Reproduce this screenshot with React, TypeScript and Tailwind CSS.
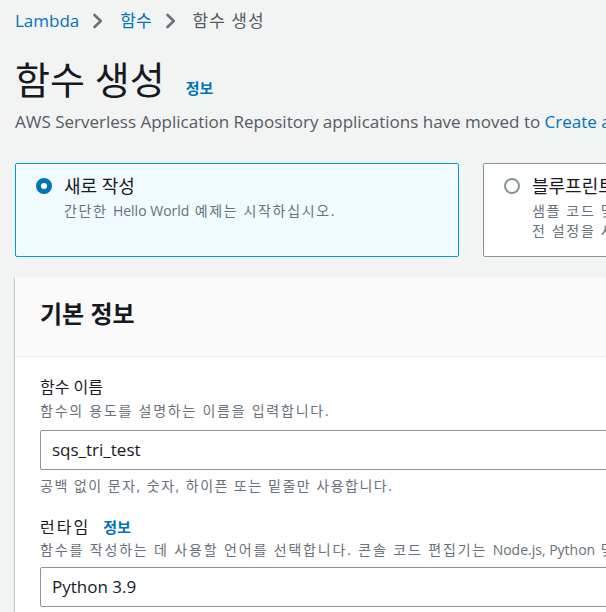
import React from "react";

const FONT = { fontFamily: '"Open Sans", "Noto Sans CJK KR", sans-serif' };

function Chevron() {
  return (
    <svg width="12" height="16" viewBox="0 0 12 16" className="ml-[13px] mr-[16px] shrink-0">
      <path d="M2.5 2 L8.8 8 L2.5 14" fill="none" stroke="#687078" strokeWidth="2.6" strokeLinecap="round" strokeLinejoin="round" />
    </svg>
  );
}

function L({ children }: { children: React.ReactNode }) {
  return <span className="tracking-normal">{children}</span>;
}

export default function App() {
  return (
    <div style={FONT} className="w-[606px] h-[612px] overflow-hidden bg-[#f2f3f3] pl-[15px] text-[#16191f]">
      {/* breadcrumb */}
      <div className="pt-[9px] flex items-center h-[33px] text-[17px] leading-[24px] whitespace-nowrap">
        <span className="text-[#0073bb]">Lambda</span>
        <Chevron />
        <span className="text-[#0073bb]">함수</span>
        <Chevron />
        <span className="text-[#545b64] tracking-[1px]">함수 생성</span>
      </div>

      {/* title */}
      <div className="mt-[24px] flex items-baseline whitespace-nowrap">
        <h1 className="text-[38px] leading-[44px] font-normal text-[#16191f]">함수 생성</h1>
        <span className="ml-[21px] text-[15px] font-bold text-[#0073bb]">정보</span>
      </div>

      <div className="mt-[10px] text-[17px] leading-[22px] text-[#545b64] whitespace-nowrap">
        AWS Serverless Application Repository applications have moved to{" "}
        <span className="text-[#0073bb]">Create application</span>.
      </div>

      {/* option cards */}
      <div className="mt-[30px] flex gap-[24px] w-[1000px]">
        <div className="w-[444px] h-[94px] shrink-0 rounded-[2px] border border-[#00a1c9] bg-[#f1faff] px-[20px] pt-[10px]">
          <div className="flex">
            <div className="mt-[4px] w-[16px] h-[16px] rounded-full border-[5px] border-[#0073bb] bg-white shrink-0" />
            <div className="ml-[12px]">
              <div className="text-[18px] leading-[24px] text-[#16191f]">새로 작성</div>
              <div className="mt-[3px] text-[14px] leading-[20px] tracking-[1.65px] text-[#687078] whitespace-nowrap">
                간단한 <L>Hello World</L> 예제는 시작하십시오.
              </div>
            </div>
          </div>
        </div>
        <div className="w-[444px] h-[94px] shrink-0 rounded-[2px] border border-[#879596] bg-white px-[20px] pt-[10px]">
          <div className="flex">
            <div className="mt-[4px] w-[16px] h-[16px] rounded-full border-[2px] border-[#879596] bg-white shrink-0" />
            <div className="ml-[12px]">
              <div className="text-[18px] leading-[24px] text-[#16191f]">블루프린트 사용</div>
              <div className="mt-[3px] text-[14px] leading-[20px] tracking-[1.65px] text-[#687078] whitespace-nowrap">
                샘플 코드 및 일반 사용 사례에 대한 구성 사<br />전 설정을 사용하여 <L>Lambda</L> 애플리케이션을 구축합니다.
              </div>
            </div>
          </div>
        </div>
      </div>

      {/* container */}
      <div className="mt-[20px] w-[1000px] bg-white shadow-[0_1px_1px_0_rgba(0,28,36,0.3),1px_1px_1px_0_rgba(0,28,36,0.15),-1px_1px_1px_0_rgba(0,28,36,0.15)]">
        <div className="h-[80px] bg-[#fafafa] border-b border-[#eaeded] pl-[25px] pt-[22px]">
          <h2 className="text-[24px] leading-[30px] font-bold text-[#16191f]">기본 정보</h2>
        </div>
        <div className="pl-[25px] pt-[18px] pb-[20px]">
          <div className="text-[16px] leading-[24px] text-[#16191f]">함수 이름</div>
          <div className="mt-[2px] text-[14px] leading-[20px] tracking-[1.75px] text-[#687078] whitespace-nowrap">
            함수의 용도를 설명하는 이름을 입력합니다.
          </div>
          <div className="mt-[9px] w-[800px] h-[40px] rounded-[2px] border border-[#879596] bg-white pl-[11px] flex items-center text-[17px] text-[#16191f]">
            sqs_tri_test
          </div>
          <div className="mt-[6px] text-[14px] leading-[20px] tracking-[1.5px] text-[#687078] whitespace-nowrap">
            공백 없이 문자, 숫자, 하이픈 또는 밑줄만 사용합니다.
          </div>
          <div className="mt-[19px] flex items-baseline leading-[24px]">
            <span className="text-[16px] tracking-[2px] text-[#16191f]">런타임</span>
            <span className="ml-[13px] text-[15px] font-bold text-[#0073bb]">정보</span>
          </div>
          <div className="mt-[1px] text-[14px] leading-[20px] tracking-[1.85px] text-[#687078] whitespace-nowrap">
            함수를 작성하는 데 사용할 언어를 선택합니다. 콘솔 코드 편집기는 <L>Node.js, Python</L> 및 <L>Ruby</L>만 지원합니다.
          </div>
          <div className="mt-[7px] w-[800px] h-[40px] rounded-[2px] border border-[#879596] bg-white pl-[11px] flex items-center text-[17px] text-[#16191f]">
            Python 3.9
          </div>
        </div>
      </div>
    </div>
  );
}
